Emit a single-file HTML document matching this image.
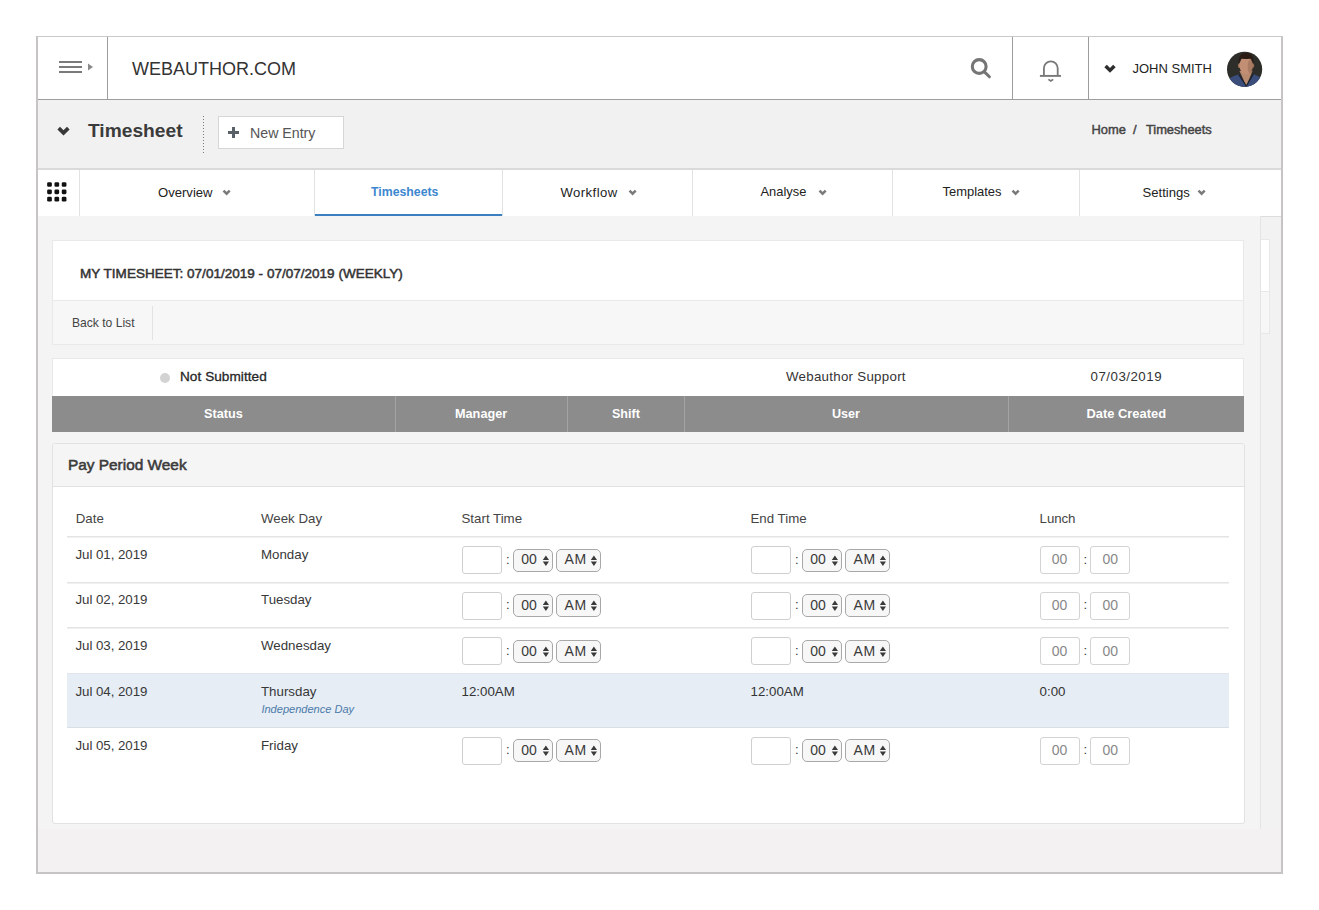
<!DOCTYPE html>
<html><head><meta charset="utf-8">
<style>
*{box-sizing:border-box;margin:0;padding:0}
html,body{width:1319px;height:910px;background:#fff;overflow:hidden}
body{font-family:"Liberation Sans",sans-serif;color:#333;position:relative}
.a{position:absolute}
.t{position:absolute;white-space:pre;line-height:1}
.frame{left:36px;top:36px;width:1247px;height:838px;background:#f3f1f2;border-left:2px solid #c7c4c6;border-right:2px solid #c7c4c6;border-bottom:2px solid #c7c4c6;border-top:1px solid #c9c9c9}
.hdr{left:38px;top:37px;width:1243px;height:63px;background:#fff;border-bottom:1px solid #9d9d9d}
.vd{position:absolute;width:1px;background:#9d9d9d}
.sub{left:38px;top:100px;width:1243px;height:68px;background:#f2f1f2}
.nav{left:38px;top:168px;width:1243px;height:48px;background:#fff;border-top:2px solid #dadada}
.nd{position:absolute;width:1px;top:170px;height:46px;background:#e2e2e2}
.card{position:absolute;background:#fff;border:1px solid #e9e9e9}
.sh{position:absolute;background:#8c8c8c}
.shd{position:absolute;width:1px;top:396px;height:36px;background:#a3a3a3}
.rl{position:absolute;left:67px;width:1162px;height:1px;background:#e3e3e3}
.inp{position:absolute;width:40px;height:28px;border:1px solid #cfcfcf;border-radius:3px;background:#fff}
.sel{position:absolute;height:23px;border:1px solid #a8a8a8;border-radius:5px;background:#f7f7f7}
.nvt{font-size:13.1px;color:#222}
</style></head>
<body>
<div class="a frame"></div>
<div class="a hdr"></div>
<div class="vd" style="left:107px;top:37px;height:63px"></div>
<div class="vd" style="left:1012px;top:37px;height:63px"></div>
<div class="vd" style="left:1088px;top:37px;height:63px"></div>
<!-- hamburger -->
<div class="a" style="left:59px;top:61px;width:23px;height:2px;background:#7a7a7a"></div>
<div class="a" style="left:59px;top:66px;width:23px;height:2px;background:#7a7a7a"></div>
<div class="a" style="left:59px;top:71px;width:23px;height:2px;background:#7a7a7a"></div>
<svg class="a" style="left:87px;top:63px" width="7" height="8"><path d="M1 0.5 L6 4 L1 7.5Z" fill="#8a8a8a"/></svg>
<div class="t" style="left:132px;top:59.5px;font-size:18px;color:#333">WEBAUTHOR.COM</div>
<!-- search -->
<svg class="a" style="left:968px;top:56px" width="26" height="26"><circle cx="11.2" cy="10.5" r="6.9" fill="none" stroke="#757575" stroke-width="3.1"/><path d="M16.4 15.9 L21.4 20.8" stroke="#757575" stroke-width="3" stroke-linecap="round"/></svg>
<!-- bell -->
<svg class="a" style="left:1038px;top:58px" width="26" height="26"><path d="M5.9 17.2 V10.2 A6.9 6.9 0 0 1 19.7 10.2 V17.2" fill="none" stroke="#777" stroke-width="1.8"/><path d="M1.9 17.9 H23" stroke="#777" stroke-width="1.9"/><path d="M10.4 21.4 L12.8 23 L15.2 21.4" fill="none" stroke="#777" stroke-width="1.7"/></svg>
<!-- user -->
<svg class="a" style="left:1104.2px;top:63.9px" width="14" height="11"><path d="M1.6 2 L6 6.4 L10.4 2" fill="none" stroke="#2e2e2e" stroke-width="3.5"/></svg>
<div class="t" style="left:1132.5px;top:61.8px;font-size:13px;color:#222">JOHN SMITH</div>
<svg class="a" style="left:1226px;top:51px" width="37" height="37">
<defs><clipPath id="av"><circle cx="18.6" cy="18.3" r="17.6"/></clipPath></defs>
<g clip-path="url(#av)">
<rect width="37" height="37" fill="#2d2e2a"/>
<path d="M0 37 L0 31 Q5 25 12.5 23.5 L20.3 35 L27.5 23 Q33 25 37 29 L37 37Z" fill="#3a4d7b"/>
<path d="M13.5 20 L20.3 35 L26.5 20Z" fill="#b88a6f"/>
<path d="M12.8 23.6 L20.3 35 M27.3 23.3 L20.3 35" stroke="#1c1f2e" stroke-width="1.1"/>
<ellipse cx="13.6" cy="14.5" rx="1.6" ry="2.6" fill="#a9785f"/>
<ellipse cx="26.6" cy="14.5" rx="1.6" ry="2.6" fill="#9c6e58"/>
<ellipse cx="20.1" cy="14.6" rx="6.6" ry="8.9" fill="#c28e74"/>
<ellipse cx="24.3" cy="15.5" rx="2.6" ry="7" fill="#8e6450" opacity="0.45"/>
<path d="M12.8 13.5 Q11.4 2.4 20.1 2 Q28.8 2.4 27.4 13.5 Q26.6 8.6 24.2 7.6 Q20.1 8.6 15.9 7.6 Q13.6 8.6 12.8 13.5Z" fill="#2a1b14"/>
</g></svg>

<!-- sub bar -->
<div class="a sub"></div>
<svg class="a" style="left:56.6px;top:125.6px" width="14" height="11"><path d="M1.7 2.1 L6.5 6.9 L11.3 2.1" fill="none" stroke="#383838" stroke-width="3.7"/></svg>
<div class="t" style="left:88px;top:120.5px;font-size:19.2px;font-weight:700;color:#3b3b3b">Timesheet</div>
<div class="a" style="left:203px;top:116px;width:1px;height:37px;background:repeating-linear-gradient(to bottom,#7a7a7a 0 1px,transparent 1px 3px)"></div>
<div class="a" style="left:218px;top:116px;width:126px;height:33px;background:#fff;border:1px solid #d6d6d6"></div>
<div class="a" style="left:228px;top:131px;width:11px;height:2.6px;background:#5a6068"></div>
<div class="a" style="left:232.2px;top:126.8px;width:2.6px;height:11px;background:#5a6068"></div>
<div class="t" style="left:250px;top:125.5px;font-size:14.2px;color:#555">New Entry</div>
<div class="t" style="left:1091.5px;top:124.1px;font-size:12.9px;color:#444;-webkit-text-stroke:0.45px #444">Home</div><div class="t" style="left:1133px;top:124.1px;font-size:12.9px;color:#444;-webkit-text-stroke:0.45px #444">/</div><div class="t" style="left:1146px;top:124.1px;font-size:12.9px;color:#444;-webkit-text-stroke:0.45px #444;letter-spacing:-0.05px">Timesheets</div>

<!-- nav -->
<div class="a nav"></div>
<div class="nd" style="left:79px"></div>
<div class="nd" style="left:314px"></div>
<div class="nd" style="left:502px"></div>
<div class="nd" style="left:692px"></div>
<div class="nd" style="left:892px"></div>
<div class="nd" style="left:1079px"></div>
<svg class="a" style="left:47.4px;top:182.2px" width="21" height="21"><g fill="#111"><rect x="0.15" y="0.15" width="4.7" height="4.7" rx="1.3"/><rect x="7.45" y="0.15" width="4.7" height="4.7" rx="1.3"/><rect x="14.75" y="0.15" width="4.7" height="4.7" rx="1.3"/><rect x="0.15" y="7.45" width="4.7" height="4.7" rx="1.3"/><rect x="7.45" y="7.45" width="4.7" height="4.7" rx="1.3"/><rect x="14.75" y="7.45" width="4.7" height="4.7" rx="1.3"/><rect x="0.15" y="14.75" width="4.7" height="4.7" rx="1.3"/><rect x="7.45" y="14.75" width="4.7" height="4.7" rx="1.3"/><rect x="14.75" y="14.75" width="4.7" height="4.7" rx="1.3"/></g></svg>
<div class="t nvt" style="left:158px;top:185.71px">Overview</div>
<svg class="a" style="left:221.5px;top:189.2px" width="10" height="8"><path d="M1.5 1.6 L4.6 4.7 L7.7 1.6" fill="none" stroke="#7a7a7a" stroke-width="2.5"/></svg>
<div class="t" style="left:371px;top:185.8px;font-size:12.3px;font-weight:700;color:#3d87cf">Timesheets</div>
<div class="a" style="left:315px;top:214px;width:187px;height:2px;background:#3b7fc0"></div>
<div class="t nvt" style="left:560.5px;top:185.71px;font-size:13.1px;letter-spacing:0.45px">Workflow</div>
<svg class="a" style="left:627.5px;top:189.2px" width="10" height="8"><path d="M1.5 1.6 L4.6 4.7 L7.7 1.6" fill="none" stroke="#7a7a7a" stroke-width="2.5"/></svg>
<div class="t nvt" style="left:760.5px;top:185.88px;font-size:12.9px">Analyse</div>
<svg class="a" style="left:817.5px;top:189.2px" width="10" height="8"><path d="M1.5 1.6 L4.6 4.7 L7.7 1.6" fill="none" stroke="#7a7a7a" stroke-width="2.5"/></svg>
<div class="t nvt" style="left:942.5px;top:185.84px;font-size:12.95px">Templates</div>
<svg class="a" style="left:1010.5px;top:189.2px" width="10" height="8"><path d="M1.5 1.6 L4.6 4.7 L7.7 1.6" fill="none" stroke="#7a7a7a" stroke-width="2.5"/></svg>
<div class="t nvt" style="left:1142.5px;top:185.71px;font-size:13.1px">Settings</div>
<svg class="a" style="left:1196.5px;top:189.2px" width="10" height="8"><path d="M1.5 1.6 L4.6 4.7 L7.7 1.6" fill="none" stroke="#7a7a7a" stroke-width="2.5"/></svg>

<!-- scrollbar track -->
<div class="a" style="left:38px;top:216px;width:1222px;height:613px;background:#f4f4f4"></div>
<div class="a" style="left:1260px;top:216px;width:1px;height:613px;background:#e4e4e4"></div>
<div class="a" style="left:1261px;top:216px;width:20px;height:613px;background:#f3f2f3"></div>
<div class="a" style="left:1261px;top:216px;width:20px;height:1px;background:#dddddd"></div>
<div class="a" style="left:1261px;top:239px;width:9px;height:53px;background:#fff;border:1px solid #e8e8e8;border-left:none"></div>
<div class="a" style="left:1261px;top:291px;width:9px;height:43px;background:#f7f7f7;border:1px solid #e8e8e8;border-left:none"></div>

<!-- title card -->
<div class="card" style="left:52px;top:240px;width:1192px;height:105px"></div>
<div class="a" style="left:53px;top:300px;width:1190px;height:44px;background:#f7f7f7;border-top:1px solid #e9e9e9"></div>
<div class="a" style="left:152px;top:306px;width:1px;height:34px;background:#e3e3e3"></div>
<div class="t" style="left:80px;top:266.6px;font-size:13.5px;color:#333;-webkit-text-stroke:0.5px #333;letter-spacing:0.02px">MY TIMESHEET: 07/01/2019 - 07/07/2019 (WEEKLY)</div>
<div class="t" style="left:72px;top:316.5px;font-size:12.1px;color:#444">Back to List</div>

<!-- status card -->
<div class="card" style="left:52px;top:358px;width:1192px;height:74px;border-bottom:none"></div>
<div class="sh" style="left:52px;top:396px;width:1192px;height:36px"></div>
<div class="shd" style="left:395px"></div>
<div class="shd" style="left:567px"></div>
<div class="shd" style="left:684px"></div>
<div class="shd" style="left:1008px"></div>
<div class="a" style="left:160px;top:372.5px;width:10px;height:10px;border-radius:50%;background:#d3d3d3"></div>
<div class="t" style="left:180px;top:370.2px;font-size:13.6px;color:#262626;-webkit-text-stroke:0.3px #262626;letter-spacing:0.05px">Not Submitted</div>
<div class="t" style="left:786px;top:370.4px;font-size:13.3px;color:#333;letter-spacing:0.28px">Webauthor Support</div>
<div class="t" style="left:1090.5px;top:370.4px;font-size:13.3px;color:#333;letter-spacing:0.5px">07/03/2019</div>
<div class="t" style="left:204px;top:407.5px;font-size:12.7px;font-weight:700;color:#fff">Status</div>
<div class="t" style="left:455px;top:407.5px;font-size:12.7px;font-weight:700;color:#fff">Manager</div>
<div class="t" style="left:612px;top:407.5px;font-size:12.56px;font-weight:700;color:#fff">Shift</div>
<div class="t" style="left:832px;top:407.5px;font-size:12.6px;font-weight:700;color:#fff">User</div>
<div class="t" style="left:1086.5px;top:407.5px;font-size:12.9px;font-weight:700;color:#fff">Date Created</div>

<!-- pay period card -->
<div class="card" style="left:52px;top:443px;width:1193px;height:381px;border-radius:3px;border-color:#e2e2e2"></div>
<div class="a" style="left:53px;top:444px;width:1191px;height:43px;background:#f5f5f5;border-bottom:1px solid #e2e2e2;border-radius:3px 3px 0 0"></div>
<div class="t" style="left:68px;top:457.2px;font-size:15.4px;color:#3b3b3b;-webkit-text-stroke:0.55px #3b3b3b">Pay Period Week</div>

<div id="rows">
<div class="t" style="left:75.7px;top:512.34px;font-size:13.3px;color:#444;letter-spacing:0px">Date</div>
<div class="t" style="left:261px;top:512.34px;font-size:13.3px;color:#444;letter-spacing:0px">Week Day</div>
<div class="t" style="left:461.5px;top:512.34px;font-size:13.3px;color:#444;letter-spacing:0px">Start Time</div>
<div class="t" style="left:750.5px;top:512.34px;font-size:13.3px;color:#444;letter-spacing:0px">End Time</div>
<div class="t" style="left:1039.6px;top:512.34px;font-size:13.3px;color:#444;letter-spacing:-0.1px">Lunch</div>
<div class="rl" style="top:536px;height:1px;background:#e4e4e4"></div>
<div class="rl" style="top:537px;height:1px;background:#f0f0f0"></div>
<div class="rl" style="top:582px;height:1px;background:#e4e4e4"></div>
<div class="rl" style="top:583px;height:1px;background:#f0f0f0"></div>
<div class="rl" style="top:627px;height:1px;background:#e4e4e4"></div>
<div class="rl" style="top:628px;height:1px;background:#f0f0f0"></div>
<div class="a" style="left:67px;top:673px;width:1162px;height:55px;background:#e6edf5;border-top:1px solid #dfe5ea;border-bottom:1px solid #d9e0e3"></div>
<div class="t" style="left:75.5px;top:547.94px;font-size:13.3px;color:#383838;letter-spacing:-0.05px">Jul 01, 2019</div>
<div class="t" style="left:261px;top:547.94px;font-size:13.3px;color:#383838">Monday</div>
<div class="inp" style="left:462px;top:546px"></div>
<div class="t" style="left:506px;top:552.50px;font-size:13px;color:#333">:</div>
<div class="sel" style="left:512.5px;top:548.5px;width:40.5px"></div>
<div class="t" style="left:521.3px;top:552.35px;font-size:14px;color:#3a3a3a">00</div>
<svg class="a" style="left:541.5px;top:554.7px" width="8" height="12"><path d="M0.8 5 L3.9 0.6 L7 5Z M0.8 6.6 L3.9 11 L7 6.6Z" fill="#3a3a3a"/></svg>
<div class="sel" style="left:556px;top:548.5px;width:45px"></div>
<div class="t" style="left:564.5px;top:552.35px;font-size:14px;color:#3a3a3a;letter-spacing:0.6px">AM</div>
<svg class="a" style="left:590px;top:554.7px" width="8" height="12"><path d="M0.8 5 L3.9 0.6 L7 5Z M0.8 6.6 L3.9 11 L7 6.6Z" fill="#3a3a3a"/></svg>
<div class="inp" style="left:751px;top:546px"></div>
<div class="t" style="left:795px;top:552.50px;font-size:13px;color:#333">:</div>
<div class="sel" style="left:801.5px;top:548.5px;width:40.5px"></div>
<div class="t" style="left:810.3px;top:552.35px;font-size:14px;color:#3a3a3a">00</div>
<svg class="a" style="left:830.5px;top:554.7px" width="8" height="12"><path d="M0.8 5 L3.9 0.6 L7 5Z M0.8 6.6 L3.9 11 L7 6.6Z" fill="#3a3a3a"/></svg>
<div class="sel" style="left:845px;top:548.5px;width:45px"></div>
<div class="t" style="left:853.5px;top:552.35px;font-size:14px;color:#3a3a3a;letter-spacing:0.6px">AM</div>
<svg class="a" style="left:879px;top:554.7px" width="8" height="12"><path d="M0.8 5 L3.9 0.6 L7 5Z M0.8 6.6 L3.9 11 L7 6.6Z" fill="#3a3a3a"/></svg>
<div class="inp" style="left:1039.5px;top:546px;border-color:#d3d3d3"></div>
<div class="t" style="left:1051.7px;top:552.45px;font-size:14px;color:#888">00</div>
<div class="t" style="left:1083.5px;top:552.50px;font-size:13px;color:#333">:</div>
<div class="inp" style="left:1090.0px;top:546px;border-color:#d3d3d3"></div>
<div class="t" style="left:1102.4px;top:552.45px;font-size:14px;color:#888">00</div>
<div class="t" style="left:75.5px;top:593.44px;font-size:13.3px;color:#383838;letter-spacing:-0.05px">Jul 02, 2019</div>
<div class="t" style="left:261px;top:593.44px;font-size:13.3px;color:#383838">Tuesday</div>
<div class="inp" style="left:462px;top:591.5px"></div>
<div class="t" style="left:506px;top:598.00px;font-size:13px;color:#333">:</div>
<div class="sel" style="left:512.5px;top:594.0px;width:40.5px"></div>
<div class="t" style="left:521.3px;top:597.85px;font-size:14px;color:#3a3a3a">00</div>
<svg class="a" style="left:541.5px;top:600.2px" width="8" height="12"><path d="M0.8 5 L3.9 0.6 L7 5Z M0.8 6.6 L3.9 11 L7 6.6Z" fill="#3a3a3a"/></svg>
<div class="sel" style="left:556px;top:594.0px;width:45px"></div>
<div class="t" style="left:564.5px;top:597.85px;font-size:14px;color:#3a3a3a;letter-spacing:0.6px">AM</div>
<svg class="a" style="left:590px;top:600.2px" width="8" height="12"><path d="M0.8 5 L3.9 0.6 L7 5Z M0.8 6.6 L3.9 11 L7 6.6Z" fill="#3a3a3a"/></svg>
<div class="inp" style="left:751px;top:591.5px"></div>
<div class="t" style="left:795px;top:598.00px;font-size:13px;color:#333">:</div>
<div class="sel" style="left:801.5px;top:594.0px;width:40.5px"></div>
<div class="t" style="left:810.3px;top:597.85px;font-size:14px;color:#3a3a3a">00</div>
<svg class="a" style="left:830.5px;top:600.2px" width="8" height="12"><path d="M0.8 5 L3.9 0.6 L7 5Z M0.8 6.6 L3.9 11 L7 6.6Z" fill="#3a3a3a"/></svg>
<div class="sel" style="left:845px;top:594.0px;width:45px"></div>
<div class="t" style="left:853.5px;top:597.85px;font-size:14px;color:#3a3a3a;letter-spacing:0.6px">AM</div>
<svg class="a" style="left:879px;top:600.2px" width="8" height="12"><path d="M0.8 5 L3.9 0.6 L7 5Z M0.8 6.6 L3.9 11 L7 6.6Z" fill="#3a3a3a"/></svg>
<div class="inp" style="left:1039.5px;top:591.5px;border-color:#d3d3d3"></div>
<div class="t" style="left:1051.7px;top:597.95px;font-size:14px;color:#888">00</div>
<div class="t" style="left:1083.5px;top:598.00px;font-size:13px;color:#333">:</div>
<div class="inp" style="left:1090.0px;top:591.5px;border-color:#d3d3d3"></div>
<div class="t" style="left:1102.4px;top:597.95px;font-size:14px;color:#888">00</div>
<div class="t" style="left:75.5px;top:639.14px;font-size:13.3px;color:#383838;letter-spacing:-0.05px">Jul 03, 2019</div>
<div class="t" style="left:261px;top:639.14px;font-size:13.3px;color:#383838">Wednesday</div>
<div class="inp" style="left:462px;top:637.2px"></div>
<div class="t" style="left:506px;top:643.70px;font-size:13px;color:#333">:</div>
<div class="sel" style="left:512.5px;top:639.7px;width:40.5px"></div>
<div class="t" style="left:521.3px;top:643.55px;font-size:14px;color:#3a3a3a">00</div>
<svg class="a" style="left:541.5px;top:645.9000000000001px" width="8" height="12"><path d="M0.8 5 L3.9 0.6 L7 5Z M0.8 6.6 L3.9 11 L7 6.6Z" fill="#3a3a3a"/></svg>
<div class="sel" style="left:556px;top:639.7px;width:45px"></div>
<div class="t" style="left:564.5px;top:643.55px;font-size:14px;color:#3a3a3a;letter-spacing:0.6px">AM</div>
<svg class="a" style="left:590px;top:645.9000000000001px" width="8" height="12"><path d="M0.8 5 L3.9 0.6 L7 5Z M0.8 6.6 L3.9 11 L7 6.6Z" fill="#3a3a3a"/></svg>
<div class="inp" style="left:751px;top:637.2px"></div>
<div class="t" style="left:795px;top:643.70px;font-size:13px;color:#333">:</div>
<div class="sel" style="left:801.5px;top:639.7px;width:40.5px"></div>
<div class="t" style="left:810.3px;top:643.55px;font-size:14px;color:#3a3a3a">00</div>
<svg class="a" style="left:830.5px;top:645.9000000000001px" width="8" height="12"><path d="M0.8 5 L3.9 0.6 L7 5Z M0.8 6.6 L3.9 11 L7 6.6Z" fill="#3a3a3a"/></svg>
<div class="sel" style="left:845px;top:639.7px;width:45px"></div>
<div class="t" style="left:853.5px;top:643.55px;font-size:14px;color:#3a3a3a;letter-spacing:0.6px">AM</div>
<svg class="a" style="left:879px;top:645.9000000000001px" width="8" height="12"><path d="M0.8 5 L3.9 0.6 L7 5Z M0.8 6.6 L3.9 11 L7 6.6Z" fill="#3a3a3a"/></svg>
<div class="inp" style="left:1039.5px;top:637.2px;border-color:#d3d3d3"></div>
<div class="t" style="left:1051.7px;top:643.65px;font-size:14px;color:#888">00</div>
<div class="t" style="left:1083.5px;top:643.70px;font-size:13px;color:#333">:</div>
<div class="inp" style="left:1090.0px;top:637.2px;border-color:#d3d3d3"></div>
<div class="t" style="left:1102.4px;top:643.65px;font-size:14px;color:#888">00</div>
<div class="t" style="left:75.5px;top:685.34px;font-size:13.3px;color:#383838;letter-spacing:-0.05px">Jul 04, 2019</div>
<div class="t" style="left:261px;top:685.34px;font-size:13.3px;color:#383838">Thursday</div>
<div class="t" style="left:261.4px;top:703.85px;font-size:11.05px;font-style:italic;color:#4b7aa9">Independence Day</div>
<div class="t" style="left:461.5px;top:685.34px;font-size:13.3px;color:#333">12:00AM</div>
<div class="t" style="left:750.5px;top:685.34px;font-size:13.3px;color:#333">12:00AM</div>
<div class="t" style="left:1039.6px;top:685.34px;font-size:13.3px;color:#333">0:00</div>
<div class="t" style="left:75.5px;top:738.74px;font-size:13.3px;color:#383838;letter-spacing:-0.05px">Jul 05, 2019</div>
<div class="t" style="left:261px;top:738.74px;font-size:13.3px;color:#383838">Friday</div>
<div class="inp" style="left:462px;top:736.5px"></div>
<div class="t" style="left:506px;top:743.00px;font-size:13px;color:#333">:</div>
<div class="sel" style="left:512.5px;top:739.0px;width:40.5px"></div>
<div class="t" style="left:521.3px;top:742.85px;font-size:14px;color:#3a3a3a">00</div>
<svg class="a" style="left:541.5px;top:745.2px" width="8" height="12"><path d="M0.8 5 L3.9 0.6 L7 5Z M0.8 6.6 L3.9 11 L7 6.6Z" fill="#3a3a3a"/></svg>
<div class="sel" style="left:556px;top:739.0px;width:45px"></div>
<div class="t" style="left:564.5px;top:742.85px;font-size:14px;color:#3a3a3a;letter-spacing:0.6px">AM</div>
<svg class="a" style="left:590px;top:745.2px" width="8" height="12"><path d="M0.8 5 L3.9 0.6 L7 5Z M0.8 6.6 L3.9 11 L7 6.6Z" fill="#3a3a3a"/></svg>
<div class="inp" style="left:751px;top:736.5px"></div>
<div class="t" style="left:795px;top:743.00px;font-size:13px;color:#333">:</div>
<div class="sel" style="left:801.5px;top:739.0px;width:40.5px"></div>
<div class="t" style="left:810.3px;top:742.85px;font-size:14px;color:#3a3a3a">00</div>
<svg class="a" style="left:830.5px;top:745.2px" width="8" height="12"><path d="M0.8 5 L3.9 0.6 L7 5Z M0.8 6.6 L3.9 11 L7 6.6Z" fill="#3a3a3a"/></svg>
<div class="sel" style="left:845px;top:739.0px;width:45px"></div>
<div class="t" style="left:853.5px;top:742.85px;font-size:14px;color:#3a3a3a;letter-spacing:0.6px">AM</div>
<svg class="a" style="left:879px;top:745.2px" width="8" height="12"><path d="M0.8 5 L3.9 0.6 L7 5Z M0.8 6.6 L3.9 11 L7 6.6Z" fill="#3a3a3a"/></svg>
<div class="inp" style="left:1039.5px;top:736.5px;border-color:#d3d3d3"></div>
<div class="t" style="left:1051.7px;top:742.95px;font-size:14px;color:#888">00</div>
<div class="t" style="left:1083.5px;top:743.00px;font-size:13px;color:#333">:</div>
<div class="inp" style="left:1090.0px;top:736.5px;border-color:#d3d3d3"></div>
<div class="t" style="left:1102.4px;top:742.95px;font-size:14px;color:#888">00</div>
</div>
</body></html>
